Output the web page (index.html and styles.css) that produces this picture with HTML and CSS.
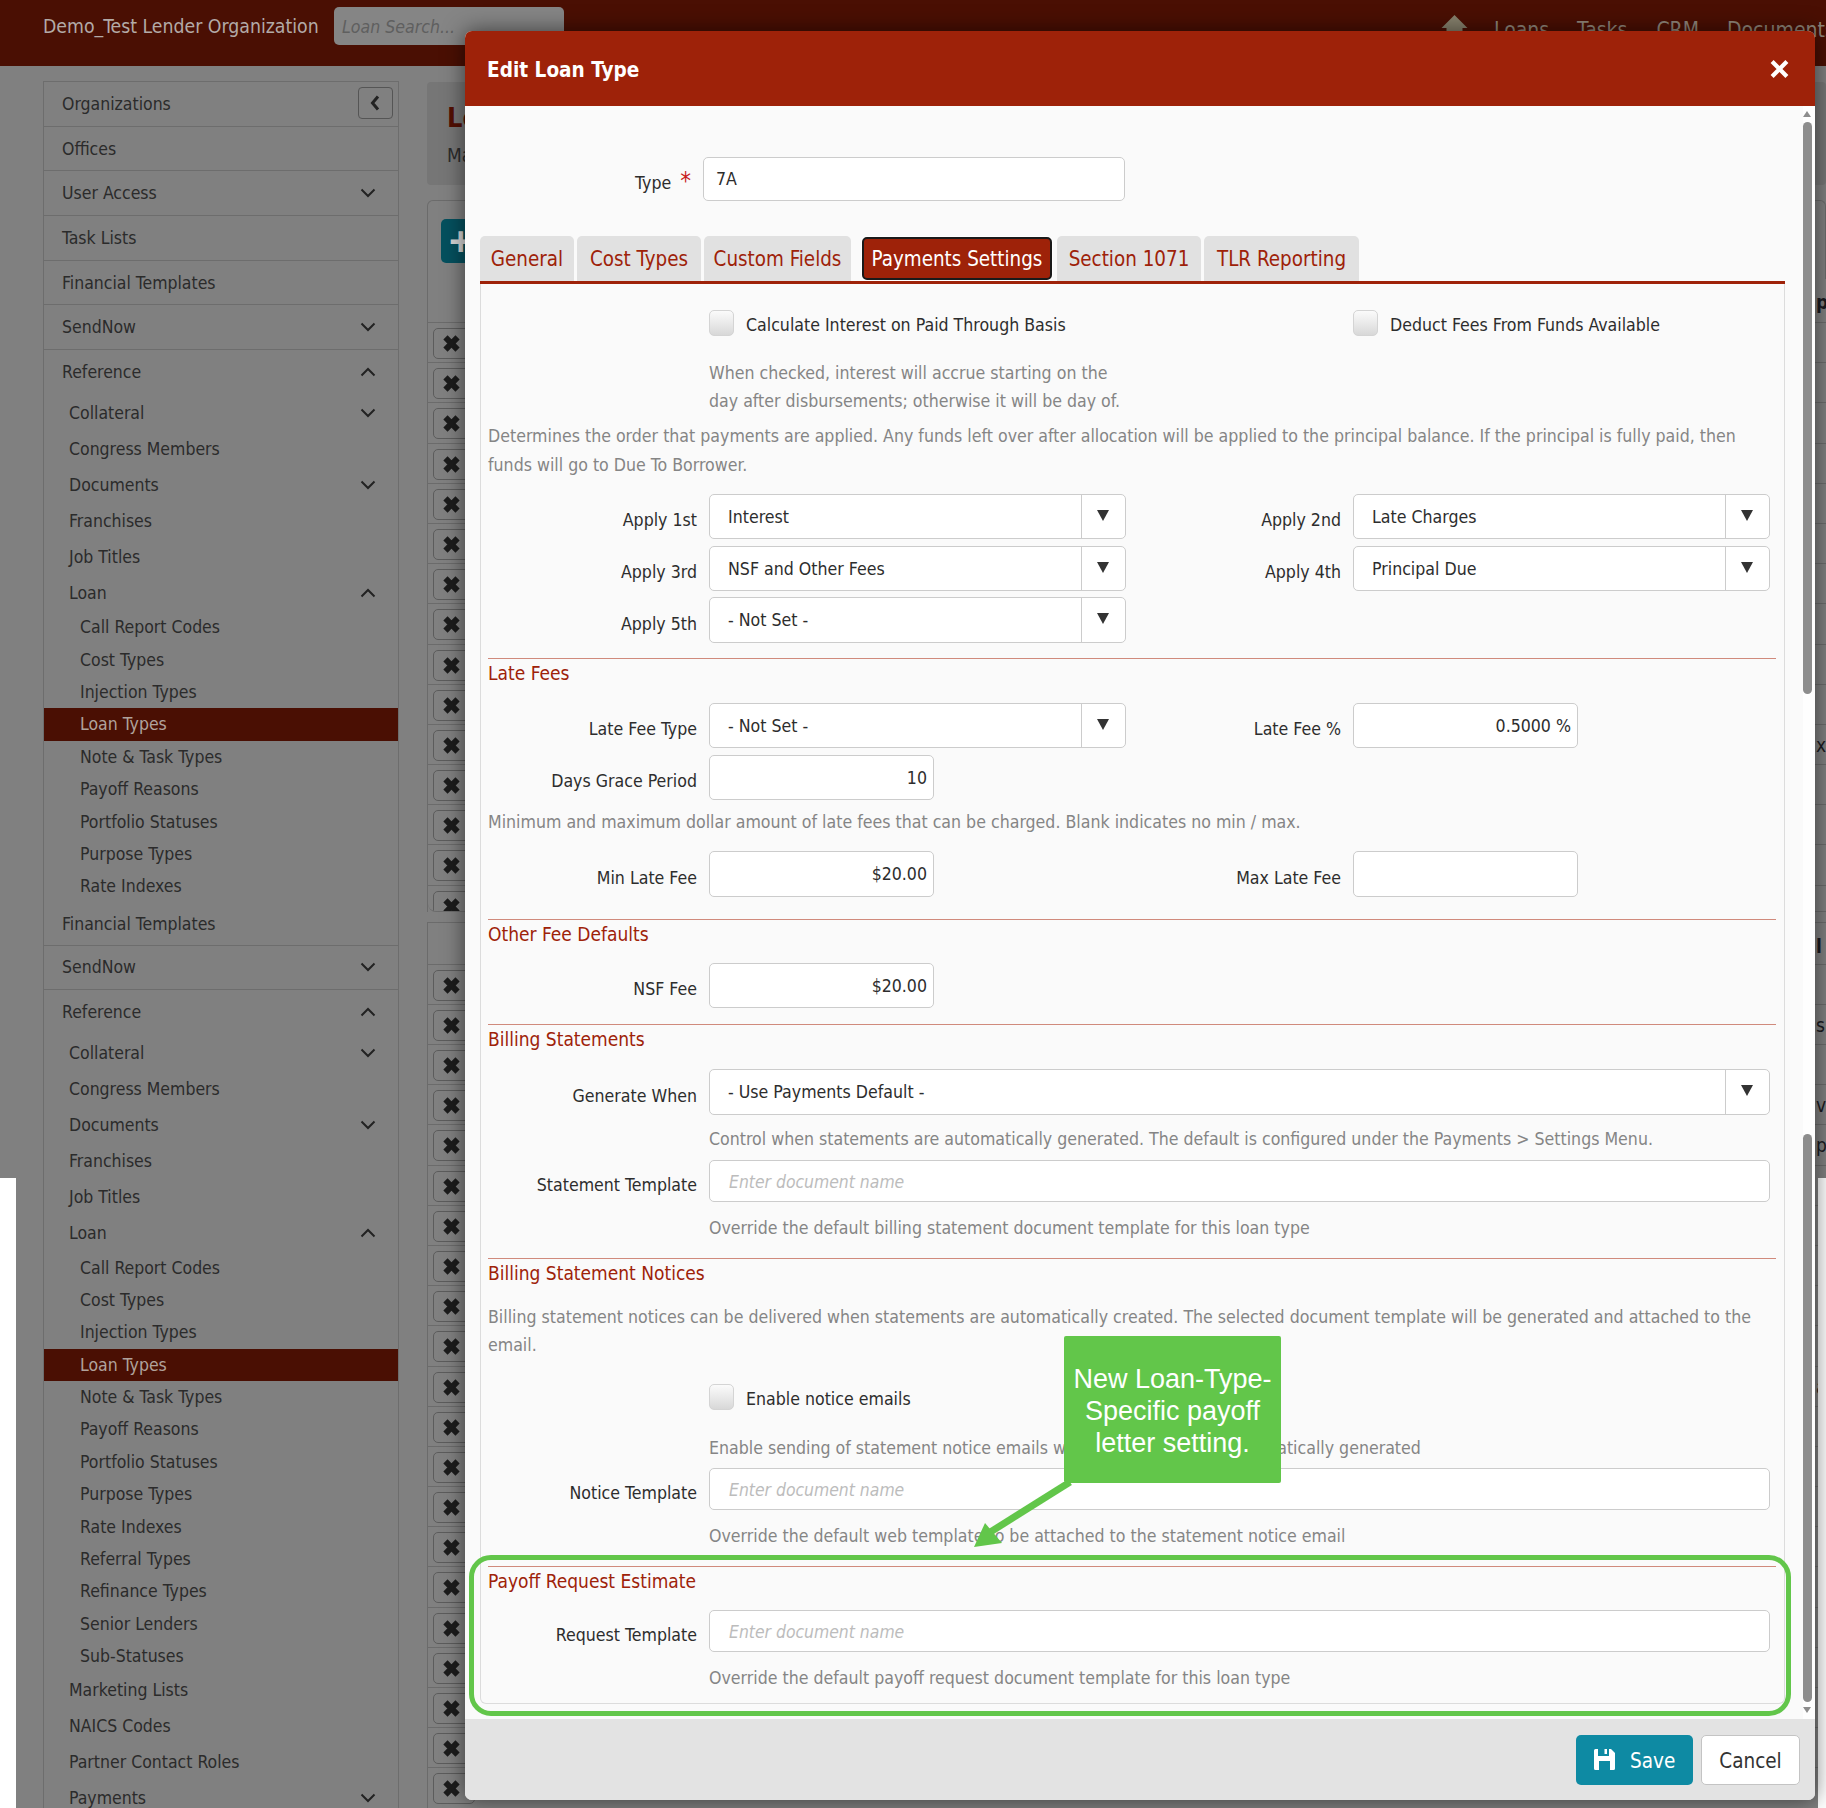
FILE: index.html
```html
<!DOCTYPE html>
<html lang="en">
<head>
    <meta charset="UTF-8">
    <meta name="viewport" content="width=device-width, initial-scale=1.0">
    <title>Edit Loan Type</title>
    <link rel="stylesheet" href="styles.css">
</head>
<body>
    <svg class="icon-defs" aria-hidden="true">
        <symbol id="chev-down" viewBox="0 0 16 10"><polyline points="1.5,1.5 8,8 14.5,1.5" fill="none" stroke="currentColor" stroke-width="2"/></symbol>
        <symbol id="chev-up" viewBox="0 0 16 10"><polyline points="1.5,8.5 8,2 14.5,8.5" fill="none" stroke="currentColor" stroke-width="2"/></symbol>
        <symbol id="remove" viewBox="0 0 16 16"><path d="M2.5 5 5 2.5 8 5.5 11 2.5 13.5 5 10.500 8 13.500 11 11 13.500 8 10.500 5 13.500 2.500 11 5.500 8z" fill="currentColor" stroke="currentColor" stroke-width="1"/></symbol>
    </svg>

    <nav class="navbar">
        <span class="brand">Demo_Test Lender Organization</span>
        <div class="loan-search">Loan Search...</div>
        <div class="nav-links">
            <svg class="home-icon" viewBox="0 0 26 24"><path d="M13 0 26 13H21V24H5V13H0z" fill="currentColor"/></svg>
            <span class="nav-loans">Loans</span>
            <span class="nav-tasks">Tasks</span>
            <span class="nav-crm">CRM</span>
            <span class="nav-docs">Documents</span>
        </div>
    </nav>

    <div class="layout">
        <aside class="sidebar">
            <div class="side-row">Organizations<button class="collapse-btn"><svg viewBox="0 0 10 16"><polyline points="8,1.500 2.500,8 8,14.500" fill="none" stroke="currentColor" stroke-width="3"/></svg></button></div>
            <div class="side-row">Offices</div>
            <div class="side-row">User Access<svg class="chev"><use href="#chev-down"/></svg></div>
            <div class="side-row">Task Lists</div>
            <div class="side-row">Financial Templates</div>
            <div class="side-row">SendNow<svg class="chev"><use href="#chev-down"/></svg></div>
            <div class="side-head">Reference<svg class="chev"><use href="#chev-up"/></svg></div>
            <div class="side-sub">Collateral<svg class="chev"><use href="#chev-down"/></svg></div>
            <div class="side-sub">Congress Members</div>
            <div class="side-sub">Documents<svg class="chev"><use href="#chev-down"/></svg></div>
            <div class="side-sub">Franchises</div>
            <div class="side-sub">Job Titles</div>
            <div class="side-sub">Loan<svg class="chev"><use href="#chev-up"/></svg></div>
            <div class="side-leaf">Call Report Codes</div>
            <div class="side-leaf">Cost Types</div>
            <div class="side-leaf">Injection Types</div>
            <div class="side-leaf active">Loan Types</div>
            <div class="side-leaf">Note &amp; Task Types</div>
            <div class="side-leaf">Payoff Reasons</div>
            <div class="side-leaf">Portfolio Statuses</div>
            <div class="side-leaf">Purpose Types</div>
            <div class="side-leaf">Rate Indexes</div>
            <div class="side-row side-row-short">Financial Templates</div>
            <div class="side-row">SendNow<svg class="chev"><use href="#chev-down"/></svg></div>
            <div class="side-head">Reference<svg class="chev"><use href="#chev-up"/></svg></div>
            <div class="side-sub">Collateral<svg class="chev"><use href="#chev-down"/></svg></div>
            <div class="side-sub">Congress Members</div>
            <div class="side-sub">Documents<svg class="chev"><use href="#chev-down"/></svg></div>
            <div class="side-sub">Franchises</div>
            <div class="side-sub">Job Titles</div>
            <div class="side-sub">Loan<svg class="chev"><use href="#chev-up"/></svg></div>
            <div class="side-leaf">Call Report Codes</div>
            <div class="side-leaf">Cost Types</div>
            <div class="side-leaf">Injection Types</div>
            <div class="side-leaf active">Loan Types</div>
            <div class="side-leaf">Note &amp; Task Types</div>
            <div class="side-leaf">Payoff Reasons</div>
            <div class="side-leaf">Portfolio Statuses</div>
            <div class="side-leaf">Purpose Types</div>
            <div class="side-leaf">Rate Indexes</div>
            <div class="side-leaf">Referral Types</div>
            <div class="side-leaf">Refinance Types</div>
            <div class="side-leaf">Senior Lenders</div>
            <div class="side-leaf">Sub-Statuses</div>
            <div class="side-sub">Marketing Lists</div>
            <div class="side-sub">NAICS Codes</div>
            <div class="side-sub">Partner Contact Roles</div>
            <div class="side-sub">Payments<svg class="chev"><use href="#chev-down"/></svg></div>
        </aside>

        <main class="main">
            <div class="title-panel">
                <h1>Loan Types</h1>
                <p>Manage loan types</p>
            </div>
            <div class="toolbar-panel">
                <button class="add-btn">+</button>
            </div>
            <div class="table">
                <div class="table-head"><span class="edge-text edge-bold">p</span></div>
                <div class="table-row"><button class="del-btn"><svg><use href="#remove"/></svg></button></div>
                <div class="table-row"><button class="del-btn"><svg><use href="#remove"/></svg></button></div>
                <div class="table-row"><button class="del-btn"><svg><use href="#remove"/></svg></button></div>
                <div class="table-row"><button class="del-btn"><svg><use href="#remove"/></svg></button></div>
                <div class="table-row"><button class="del-btn"><svg><use href="#remove"/></svg></button></div>
                <div class="table-row"><button class="del-btn"><svg><use href="#remove"/></svg></button></div>
                <div class="table-row"><button class="del-btn"><svg><use href="#remove"/></svg></button></div>
                <div class="table-row"><button class="del-btn"><svg><use href="#remove"/></svg></button></div>
                <div class="table-row"><button class="del-btn"><svg><use href="#remove"/></svg></button></div>
                <div class="table-row"><button class="del-btn"><svg><use href="#remove"/></svg></button></div>
                <div class="table-row"><button class="del-btn"><svg><use href="#remove"/></svg></button><span class="edge-text">xe</span></div>
                <div class="table-row"><button class="del-btn"><svg><use href="#remove"/></svg></button></div>
                <div class="table-row"><button class="del-btn"><svg><use href="#remove"/></svg></button></div>
                <div class="table-row"><button class="del-btn"><svg><use href="#remove"/></svg></button></div>
                <div class="table-row table-row-cut"><button class="del-btn"><svg><use href="#remove"/></svg></button></div>
            </div>
            <div class="table table-second">
                <div class="table-head table-head-second"><span class="edge-text edge-bold">l</span></div>
                <div class="table-row"><button class="del-btn"><svg><use href="#remove"/></svg></button></div>
                <div class="table-row"><button class="del-btn"><svg><use href="#remove"/></svg></button><span class="edge-text">s</span></div>
                <div class="table-row"><button class="del-btn"><svg><use href="#remove"/></svg></button></div>
                <div class="table-row"><button class="del-btn"><svg><use href="#remove"/></svg></button><span class="edge-text">v</span></div>
                <div class="table-row"><button class="del-btn"><svg><use href="#remove"/></svg></button><span class="edge-text">p</span></div>
                <div class="table-row"><button class="del-btn"><svg><use href="#remove"/></svg></button></div>
                <div class="table-row"><button class="del-btn"><svg><use href="#remove"/></svg></button></div>
                <div class="table-row"><button class="del-btn"><svg><use href="#remove"/></svg></button></div>
                <div class="table-row"><button class="del-btn"><svg><use href="#remove"/></svg></button></div>
                <div class="table-row"><button class="del-btn"><svg><use href="#remove"/></svg></button></div>
                <div class="table-row"><button class="del-btn"><svg><use href="#remove"/></svg></button><span class="edge-text">a</span></div>
                <div class="table-row"><button class="del-btn"><svg><use href="#remove"/></svg></button></div>
                <div class="table-row"><button class="del-btn"><svg><use href="#remove"/></svg></button></div>
                <div class="table-row"><button class="del-btn"><svg><use href="#remove"/></svg></button></div>
                <div class="table-row"><button class="del-btn"><svg><use href="#remove"/></svg></button></div>
                <div class="table-row"><button class="del-btn"><svg><use href="#remove"/></svg></button></div>
                <div class="table-row"><button class="del-btn"><svg><use href="#remove"/></svg></button></div>
                <div class="table-row"><button class="del-btn"><svg><use href="#remove"/></svg></button></div>
                <div class="table-row"><button class="del-btn"><svg><use href="#remove"/></svg></button></div>
                <div class="table-row"><button class="del-btn"><svg><use href="#remove"/></svg></button></div>
                <div class="table-row"><button class="del-btn"><svg><use href="#remove"/></svg></button></div>
            </div>
        </main>
    </div>

    <div class="page-edge page-edge-left"></div>
    <div class="page-edge page-edge-right"></div>

    <div class="modal">
        <div class="modal-header">
            <h2>Edit Loan Type</h2>
            <svg class="modal-close" viewBox="0 0 18 18"><path d="M2 2 16 16M16 2 2 16" fill="none" stroke="currentColor" stroke-width="4"/></svg>
        </div>

        <div class="modal-body">
            <div class="form-row type-row">
                <label class="lbl">Type <span class="req">*</span></label>
                <div class="input type-input">7A</div>
            </div>

            <div class="tabs">
                <span class="tab tab-general">General</span>
                <span class="tab tab-cost">Cost Types</span>
                <span class="tab tab-custom">Custom Fields</span>
                <span class="tab tab-active">Payments Settings</span>
                <span class="tab tab-section">Section 1071</span>
                <span class="tab tab-tlr">TLR Reporting</span>
            </div>

            <div class="tab-panel">
                <div class="check-line mt-26">
                    <div class="check-cell"><span class="checkbox"></span>Calculate Interest on Paid Through Basis</div>
                    <div class="check-cell"><span class="checkbox"></span>Deduct Fees From Funds Available</div>
                </div>
                <p class="help indent mt-23">When checked, interest will accrue starting on the<br>day after disbursements; otherwise it will be day of.</p>
                <p class="help para mt-7">Determines the order that payments are applied. Any funds left over after allocation will be applied to the principal balance. If the principal is fully paid, then funds will go to Due To Borrower.</p>

                <div class="form-row mt-14">
                    <label class="lbl">Apply 1st</label>
                    <div class="select">Interest<span class="select-btn"></span></div>
                    <label class="lbl lbl-second">Apply 2nd</label>
                    <div class="select">Late Charges<span class="select-btn"></span></div>
                </div>
                <div class="form-row mt-7">
                    <label class="lbl">Apply 3rd</label>
                    <div class="select">NSF and Other Fees<span class="select-btn"></span></div>
                    <label class="lbl lbl-second">Apply 4th</label>
                    <div class="select">Principal Due<span class="select-btn"></span></div>
                </div>
                <div class="form-row mt-6">
                    <label class="lbl">Apply 5th</label>
                    <div class="select tall">- Not Set -<span class="select-btn"></span></div>
                </div>

                <hr class="rule mt-15">
                <h3 class="section-title">Late Fees</h3>
                <div class="form-row mt-18">
                    <label class="lbl">Late Fee Type</label>
                    <div class="select">- Not Set -<span class="select-btn"></span></div>
                    <label class="lbl lbl-second">Late Fee %</label>
                    <div class="input input-short num">0.5000 %</div>
                </div>
                <div class="form-row mt-7">
                    <label class="lbl">Days Grace Period</label>
                    <div class="input input-short num">10</div>
                </div>
                <p class="help mt-8">Minimum and maximum dollar amount of late fees that can be charged. Blank indicates no min / max.</p>
                <div class="form-row mt-15">
                    <label class="lbl">Min Late Fee</label>
                    <div class="input input-short num tall">$20.00</div>
                    <label class="lbl lbl-wide">Max Late Fee</label>
                    <div class="input input-short tall"></div>
                </div>

                <hr class="rule mt-22">
                <h3 class="section-title">Other Fee Defaults</h3>
                <div class="form-row mt-17">
                    <label class="lbl">NSF Fee</label>
                    <div class="input input-short num">$20.00</div>
                </div>

                <hr class="rule mt-16">
                <h3 class="section-title">Billing Statements</h3>
                <div class="form-row mt-18">
                    <label class="lbl">Generate When</label>
                    <div class="select select-wide tall">- Use Payments Default -<span class="select-btn"></span></div>
                </div>
                <p class="help indent mt-10">Control when statements are automatically generated. The default is configured under the Payments &gt; Settings Menu.</p>
                <div class="form-row mt-7">
                    <label class="lbl">Statement Template</label>
                    <div class="input input-doc">Enter document name</div>
                </div>
                <p class="help indent mt-12">Override the default billing statement document template for this loan type</p>

                <hr class="rule mt-16">
                <h3 class="section-title">Billing Statement Notices</h3>
                <p class="help mt-18">Billing statement notices can be delivered when statements are automatically created. The selected document template will be generated and attached to the email.</p>
                <div class="check-line mt-25">
                    <div class="check-cell"><span class="checkbox"></span>Enable notice emails</div>
                </div>
                <p class="help indent mt-24">Enable sending of statement notice emails when statements are automatically generated</p>
                <div class="form-row mt-6">
                    <label class="lbl">Notice Template</label>
                    <div class="input input-doc">Enter document name</div>
                </div>
                <p class="help indent mt-12">Override the default web template to be attached to the statement notice email</p>

                <hr class="rule mt-16">
                <h3 class="section-title">Payoff Request Estimate</h3>
                <div class="form-row mt-17">
                    <label class="lbl">Request Template</label>
                    <div class="input input-doc">Enter document name</div>
                </div>
                <p class="help indent mt-12">Override the default payoff request document template for this loan type</p>
            </div>

            <div class="scroll-track">
                <span class="scroll-up"></span>
                <span class="scroll-thumb scroll-thumb-top"></span>
                <span class="scroll-thumb scroll-thumb-bottom"></span>
                <span class="scroll-down"></span>
            </div>
        </div>

        <div class="modal-footer">
            <button class="btn btn-save">
                <svg viewBox="0 0 21 21"><path d="M0 1.500Q0 0 1.500 0H4V7H15V0H17L21 4V19.500Q21 21 19.500 21H16V12H5V21H1.500Q0 21 0 19.500ZM10.500 0H13V5H10.500Z" fill="currentColor"/></svg>
                Save
            </button>
            <button class="btn btn-cancel">Cancel</button>
        </div>

        <div class="focus-frame"></div>
        <div class="callout">New Loan-Type-<br>Specific payoff<br>letter setting.</div>
        <svg class="callout-arrow" viewBox="0 0 110 70">
            <line x1="100" y1="0" x2="14" y2="54" stroke="#62c64a" stroke-width="7"/>
            <polygon points="4,65 32,61 15,41" fill="#62c64a"/>
        </svg>
    </div>
</body>
</html>
```

FILE: styles.css
```css
* {
    box-sizing: border-box;
}

html, body {
    margin: 0;
    padding: 0;
    height: 1808px;
    overflow: hidden;
}

body {
    position: relative;
    background-color: #808080;
    color: #2b2b2b;
    font-family: "DejaVu Sans Condensed", "DejaVu Sans", sans-serif;
    font-size: 17.6px;
}

.icon-defs {
    position: absolute;
    width: 0;
    height: 0;
}

/* navbar */
.navbar {
    height: 66px;
    background-color: #4a0f03;
    display: flex;
    align-items: flex-start;
    padding-left: 43px;
    position: relative;
}

.brand {
    color: #b3aaa7;
    font-size: 19.3px;
    line-height: 54px;
    width: 291px;
    white-space: nowrap;
}

.loan-search {
    margin-top: 7px;
    width: 230px;
    height: 38px;
    line-height: 40px;
    padding-left: 8px;
    background-color: #858585;
    border-radius: 5px;
    color: #5f5f5f;
    font-style: italic;
}

.nav-links {
    position: absolute;
    top: 15px;
    left: 1441px;
    right: 0;
    color: #8f8579;
    font-size: 21px;
    display: flex;
    white-space: nowrap;
}

.home-icon {
    flex-shrink: 0;
    width: 27px;
    height: 24px;
    color: #86806c;
    margin-right: 26px;
}

.nav-links span {
    margin-top: 3px;
}

.nav-loans { margin-right: 28px; }
.nav-tasks { margin-right: 29px; }
.nav-crm { margin-right: 28px; }

/* background page */
.layout {
    display: flex;
    align-items: flex-start;
    padding: 15px 0 0 43px;
    gap: 28px;
}

.sidebar {
    width: 356px;
    flex-shrink: 0;
    border: 1px solid #6d6d6d;
    border-bottom: 0;
    font-size: 17.5px;
}

.side-row, .side-head, .side-sub, .side-leaf {
    display: flex;
    align-items: center;
    justify-content: space-between;
    padding-right: 22px;
    white-space: nowrap;
}

.side-row {
    height: 44.7px;
    padding-left: 18px;
    border-bottom: 1px solid #6d6d6d;
    position: relative;
}

.side-row-short {
    height: 43px;
}

.side-head {
    height: 45px;
    padding-left: 18px;
    padding-bottom: 2px;
}

.side-sub {
    height: 36px;
    padding-left: 25px;
}

.side-leaf {
    height: 32.4px;
    padding-left: 36px;
}

.side-leaf.active {
    background-color: #4a0f03;
    color: #b0a29c;
}

.chev {
    width: 16px;
    height: 10px;
    color: #222;
}

.collapse-btn {
    position: absolute;
    top: 5px;
    right: 5px;
    width: 35px;
    height: 32px;
    padding: 7px 11px;
    background: #808080;
    border: 1px solid #555;
    border-radius: 4px;
    color: #222;
    display: flex;
}

.main {
    flex: 1;
    min-width: 0;
    padding-top: 1px;
}

.title-panel {
    height: 103px;
    background-color: #767676;
    padding: 20px 20px 0;
    border-radius: 4px;
    white-space: nowrap;
}

.title-panel h1 {
    margin: 0;
    color: #520f03;
    font-size: 27px;
    line-height: 32px;
}

.title-panel p {
    margin: 10px 0 0;
    font-size: 19px;
}

.toolbar-panel {
    height: 79px;
    margin-top: 15px;
    padding: 18px 13px;
    border: 1px solid #6b6b6b;
    border-bottom: 0;
    border-radius: 6px 6px 0 0;
}

.add-btn {
    width: 120px;
    height: 44px;
    background-color: #05505e;
    border: 0;
    border-radius: 5px;
    color: #d5d5d5;
    font-size: 40px;
    font-weight: bold;
    line-height: 40px;
    text-align: left;
    padding: 0 0 0 8px;
}

.table {
    border-left: 1px solid #6b6b6b;
}

.table-head {
    height: 44px;
    border-bottom: 1px solid #6b6b6b;
    position: relative;
}

.table-head-second {
    height: 42px;
}

.table-second {
    border-top: 1px solid #6b6b6b;
}

.table-row {
    height: 40.2px;
    border-bottom: 1px solid #6b6b6b;
    padding: 5px 0 0 5px;
    position: relative;
    overflow: hidden;
}

.table-row-cut {
    height: 26px;
    border-radius: 0 0 0 8px;
    margin-bottom: 10px;
}

.del-btn {
    width: 42px;
    height: 31px;
    padding: 0 0 0 7px;
    background: #808080;
    border: 1px solid #5c5c5c;
    border-radius: 5px;
    color: #1c1c1c;
    display: flex;
    align-items: center;
}

.del-btn svg {
    width: 21px;
    height: 21px;
}

.edge-text {
    position: absolute;
    left: 1388px;
    top: 9px;
    font-size: 19px;
    color: #1b1b22;
}

.edge-bold {
    font-weight: bold;
    top: 12px;
}

.page-edge {
    position: absolute;
    top: 1178px;
    bottom: 0;
    background-color: #fff;
}

.page-edge-left {
    left: 0;
    width: 16px;
}

.page-edge-right {
    right: 0;
    width: 8px;
}

/* modal */
.modal {
    position: absolute;
    left: 465px;
    top: 31px;
    width: 1350px;
    height: 1769px;
    display: flex;
    flex-direction: column;
    background-color: #fafafa;
    border-radius: 7px;
    box-shadow: 0 0 22px rgba(0, 0, 0, 0.55);
    overflow: hidden;
}

.modal-header {
    height: 75px;
    flex-shrink: 0;
    background-color: #9e2209;
    color: #fff;
    display: flex;
    align-items: center;
    justify-content: space-between;
    padding: 0 26px 0 22px;
}

.modal-header h2 {
    margin: 2px 0 0;
    font-size: 20.6px;
}

.modal-close {
    width: 19px;
    height: 20px;
}

.modal-body {
    position: relative;
    flex: 1;
    min-height: 0;
    padding-left: 15px;
    padding-right: 30px;
}

.form-row {
    display: flex;
    align-items: center;
    gap: 12px;
}

.lbl {
    width: 209px;
    flex-shrink: 0;
    text-align: right;
    padding-top: 7px;
    color: #2d2d2d;
    white-space: nowrap;
}

.lbl-second {
    width: 203px;
}

.lbl-wide {
    width: 395px;
}

.req {
    color: #c81e1e;
    font-size: 24px;
    line-height: 18px;
    margin-left: 4px;
}

.type-row {
    margin-top: 51px;
}

.type-row .lbl {
    width: 211px;
}

.input, .select {
    background-color: #fff;
    border: 1px solid #ccc;
    border-radius: 5px;
    height: 45px;
    line-height: 45px;
    color: #2d2d2d;
    flex-shrink: 0;
    white-space: nowrap;
}

.input {
    padding: 0 12px;
}

.type-input {
    width: 422px;
    height: 44px;
    line-height: 43px;
}

.input-short {
    width: 225px;
}

.input.num {
    text-align: right;
    padding-right: 6px;
}

.input-doc {
    width: 1061px;
    height: 42px;
    line-height: 42px;
    padding-left: 19px;
    color: #bcbcbc;
    font-size: 17.4px;
    font-style: italic;
}

.tall {
    height: 46px;
}

.select {
    width: 417px;
    position: relative;
    padding-left: 18px;
}

.select-wide {
    width: 1061px;
}

.select-btn {
    position: absolute;
    top: 0;
    right: 0;
    bottom: 0;
    width: 44px;
    border-left: 1px solid #ccc;
}

.select-btn::after {
    content: "";
    position: absolute;
    left: 15px;
    top: 15px;
    border-left: 6px solid transparent;
    border-right: 6px solid transparent;
    border-top: 11px solid #333;
}

/* tabs */
.tabs {
    display: flex;
    margin-top: 35px;
    height: 48px;
    border-bottom: 3px solid #9e2209;
    width: 1305px;
}

.tab {
    height: 45px;
    line-height: 46px;
    text-align: center;
    background-color: #e1e1e1;
    color: #9e2209;
    font-size: 20.4px;
    border-radius: 5px 5px 0 0;
    white-space: nowrap;
}

.tab-general { width: 94px; margin-right: 3px; }
.tab-cost { width: 124px; margin-right: 3px; }
.tab-custom { width: 147px; margin-right: 11px; }
.tab-section { width: 144px; margin-right: 3px; }
.tab-tlr { width: 155px; }

.tab-active {
    width: 190px;
    margin-right: 5px;
    margin-top: 1px;
    height: 43px;
    line-height: 40px;
    background-color: #9e2209;
    color: #fff;
    border: 2px solid #1a1a1a;
    border-radius: 5px;
    box-shadow: 0 0 0 1px #fff;
}

.tab-panel {
    display: flow-root;
    width: 1305px;
    height: 1420px;
    padding: 0 8px 0 7px;
    border: 1px solid #dcdcdc;
    border-top: 0;
    border-radius: 0 0 6px 6px;
}

.check-line {
    display: flex;
    padding-left: 221px;
}

.check-cell {
    display: flex;
    align-items: center;
    flex: 0 0 644px;
    height: 26px;
    padding-top: 4px;
    color: #2d2d2d;
    white-space: nowrap;
}

.checkbox {
    width: 25px;
    height: 26px;
    margin-top: -4px;
    margin-right: 12px;
    flex-shrink: 0;
    border: 1px solid #d4d4d4;
    border-radius: 5px;
    background: linear-gradient(#fbfbfb, #d8d8d8);
}

.help {
    margin: 0;
    color: #858585;
    line-height: 28px;
}

.para {
    line-height: 29px;
}

.indent {
    padding-left: 221px;
}

.rule {
    border: 0;
    height: 1px;
    background-color: #d08a7c;
    margin-bottom: 0;
}

.section-title {
    margin: 2px 0 0;
    color: #9e2209;
    font-size: 19px;
    font-weight: normal;
    line-height: 24px;
}

.mt-6 { margin-top: 6px; }
.mt-7 { margin-top: 7px; }
.mt-8 { margin-top: 8px; }
.mt-10 { margin-top: 10px; }
.mt-12 { margin-top: 12px; }
.mt-14 { margin-top: 14px; }
.mt-15 { margin-top: 15px; }
.mt-16 { margin-top: 16px; }
.mt-17 { margin-top: 17px; }
.mt-18 { margin-top: 18px; }
.mt-22 { margin-top: 22px; }
.mt-23 { margin-top: 23px; }
.mt-24 { margin-top: 24px; }
.mt-25 { margin-top: 25px; }
.mt-26 { margin-top: 26px; }

/* scrollbar */
.scroll-track {
    position: absolute;
    top: 0;
    right: 0;
    bottom: 0;
    width: 12px;
    background-color: #fefefe;
}

.scroll-thumb {
    position: absolute;
    left: 0;
    width: 9px;
    background-color: #8d8d8d;
    border-radius: 5px;
}

.scroll-thumb-top {
    top: 16px;
    height: 572px;
}

.scroll-thumb-bottom {
    top: 1028px;
    height: 568px;
}

.scroll-up, .scroll-down {
    position: absolute;
    left: 0;
    border-left: 4.500px solid transparent;
    border-right: 4.500px solid transparent;
}

.scroll-up {
    top: 5px;
    border-bottom: 6px solid #8d8d8d;
}

.scroll-down {
    top: 1601px;
    border-top: 6px solid #8d8d8d;
}

/* footer */
.modal-footer {
    height: 81px;
    flex-shrink: 0;
    background-color: #e3e3e3;
    display: flex;
    justify-content: flex-end;
    align-items: flex-start;
    gap: 8px;
    padding: 16px 15px 0 0;
}

.btn {
    height: 50px;
    border-radius: 5px;
    padding-top: 2px;
    font-family: "DejaVu Sans Condensed", "DejaVu Sans", sans-serif;
    font-size: 20.5px;
}

.btn-save {
    width: 117px;
    background-color: #0e8aa3;
    border: 0;
    color: #fff;
    display: flex;
    align-items: center;
    padding: 2px 0 0 18px;
    gap: 15px;
}

.btn-save svg {
    width: 21px;
    height: 21px;
    margin-top: -4px;
}

.btn-cancel {
    width: 99px;
    background-color: #fff;
    border: 1px solid #c4c4c4;
    color: #333;
}

/* annotation over the screenshot */
.focus-frame {
    position: absolute;
    left: 4px;
    top: 1524px;
    width: 1322px;
    height: 161px;
    border: 5px solid #62c64a;
    border-radius: 22px;
}

.callout {
    position: absolute;
    left: 599px;
    top: 1305px;
    width: 217px;
    height: 147px;
    padding-top: 27px;
    background-color: #62c64a;
    border-radius: 2px;
    color: #fff;
    font-family: "Liberation Sans", Arial, sans-serif;
    font-size: 27px;
    line-height: 32px;
    text-align: center;
    white-space: nowrap;
}

.callout-arrow {
    position: absolute;
    left: 505px;
    top: 1451px;
    width: 110px;
    height: 70px;
}
```
